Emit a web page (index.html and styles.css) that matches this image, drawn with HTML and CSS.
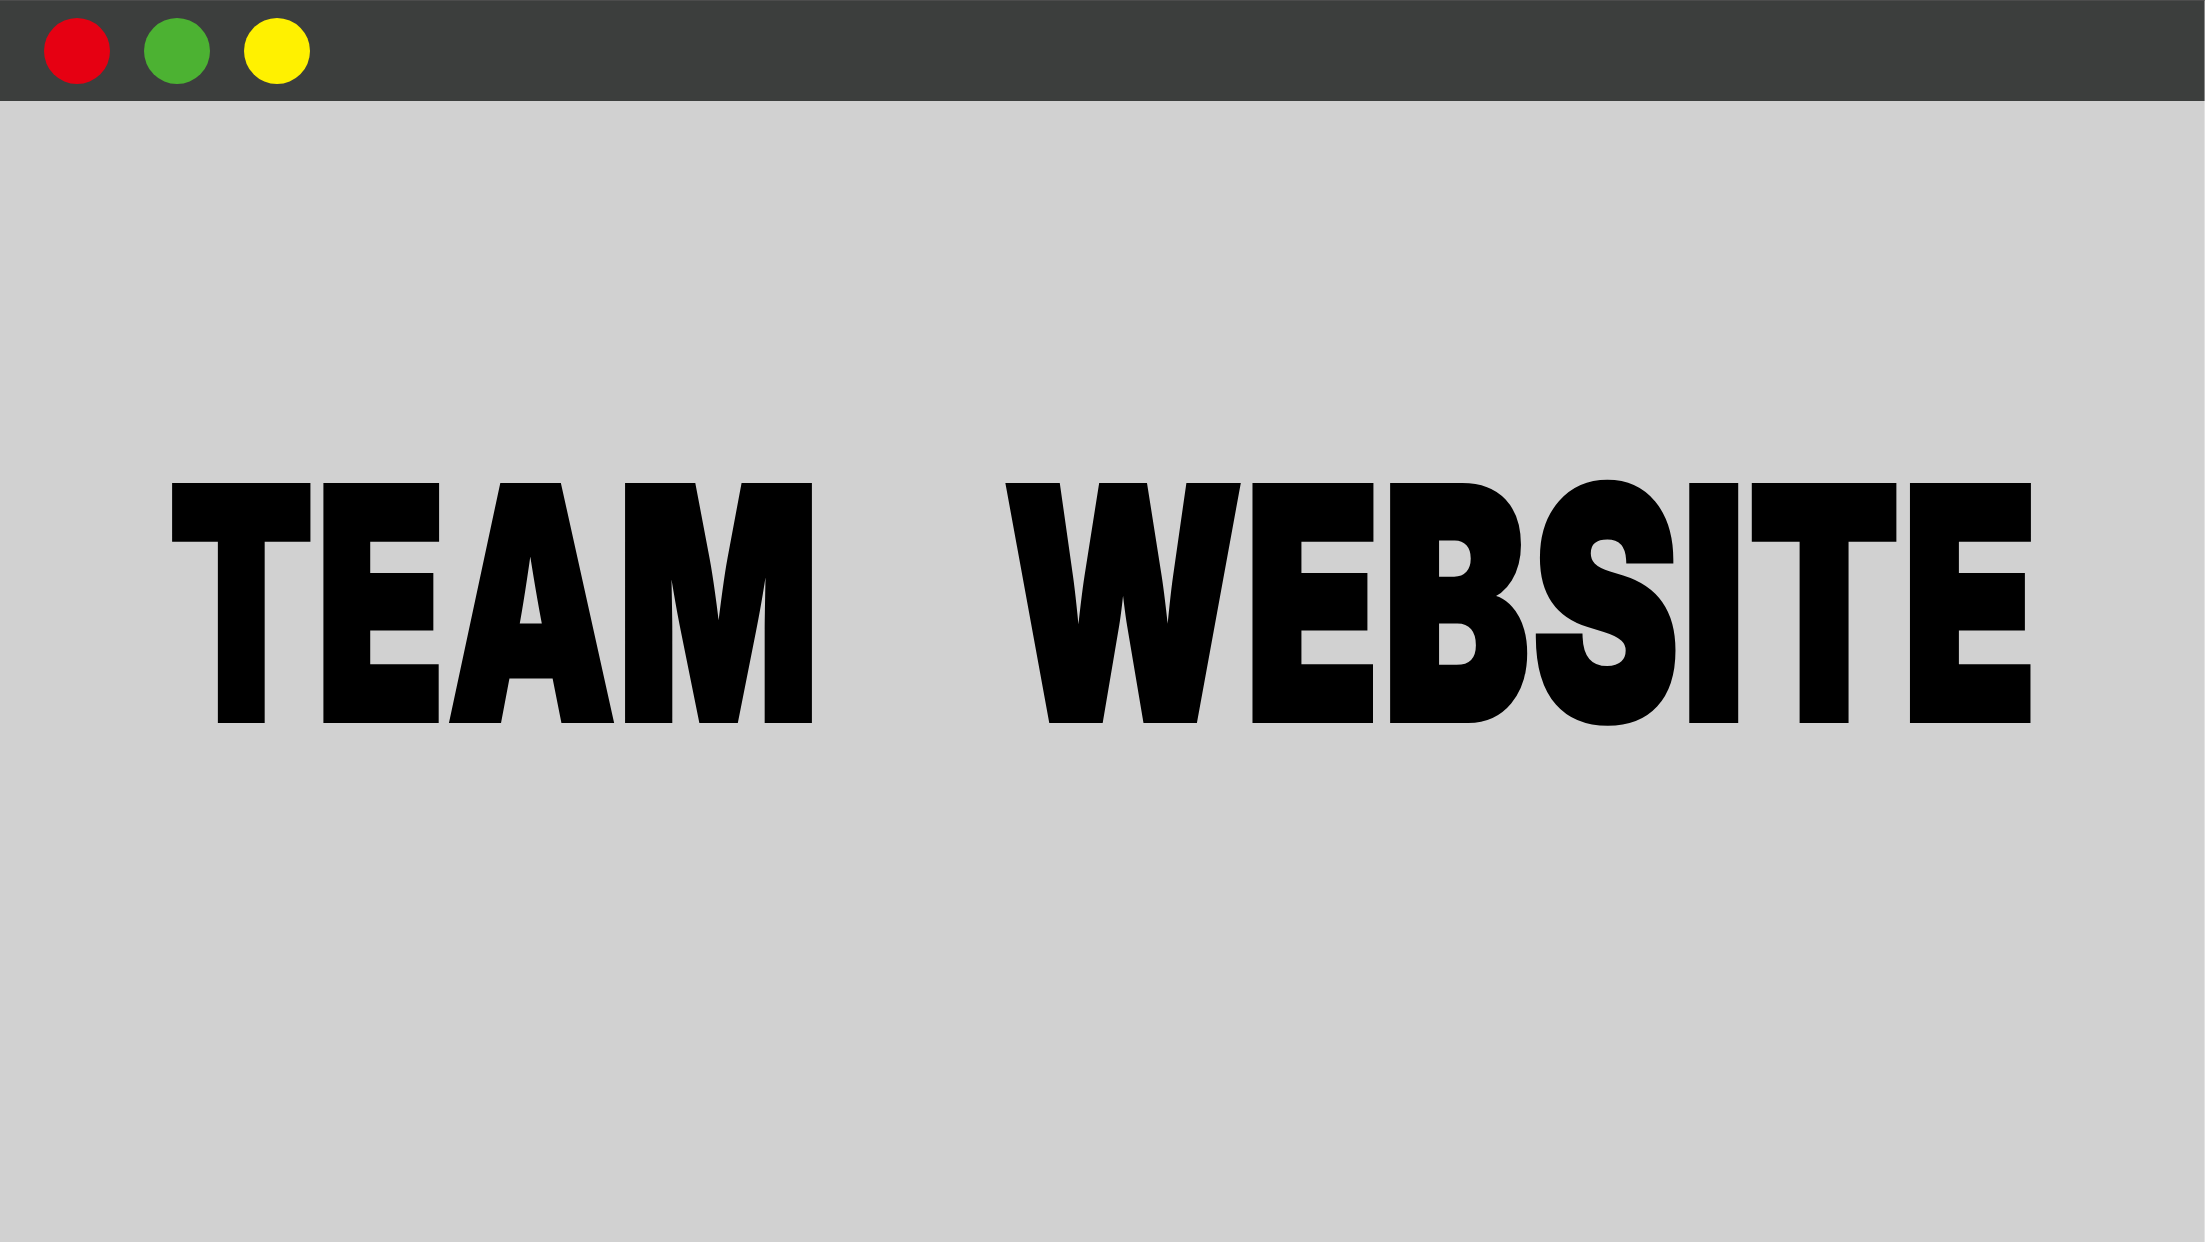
FILE: index.html
```html
<!DOCTYPE html>
<html lang="en">
<head>
<meta charset="utf-8">
<title>Team Website</title>
<link rel="stylesheet" href="styles.css">
</head>
<body>
<div class="window">
  <header class="titlebar">
    <span class="dot dot-red"></span>
    <span class="dot dot-green"></span>
    <span class="dot dot-yellow"></span>
  </header>
  <main class="stage">
    <h1 class="title">
      <span class="word word-team"><span class="ink">TEAM</span></span>
      <span class="word word-website"><span class="ink">WEBSITE</span></span>
    </h1>
  </main>
</div>
</body>
</html>
```
FILE: styles.css
```css
html, body {
  margin: 0;
  padding: 0;
  background: #d1d1d1;
}
.window {
  width: 2205px;
  height: 1242px;
  display: flex;
  flex-direction: column;
  background: #d1d1d1;
  overflow: hidden;
}
.titlebar {
  box-sizing: border-box;
  height: 101px;
  border-top: 1px solid #4c4c4c;
  border-right: 1px solid #8a8a8a;
  background: #3c3e3d;
  display: flex;
  align-items: center;
  gap: 34px;
  padding-left: 44px;
  flex-shrink: 0;
}
.dot {
  width: 66px;
  height: 66px;
  border-radius: 50%;
  display: block;
}
.dot-red { background: #e60012; }
.dot-green { background: #4cb232; }
.dot-yellow { background: #fff100; }
.stage {
  flex: 1;
  box-sizing: border-box;
  padding-top: 302px;
  border-right: 1px solid #e2e2e2;
}
.title {
  margin: 0;
  display: flex;
  padding-left: 169px;
  gap: 191px;
  font-family: Inter, "Liberation Sans", sans-serif;
  font-weight: 900;
  font-size: 319px;
  line-height: 400px;
  color: #000;
}
.word {
  display: block;
  white-space: nowrap;
}
.word-team { width: 644px; }
.word-website { width: 1027px; }
.ink {
  display: inline-block;
  transform-origin: left center;
  transform: scaleX(0.66);
  letter-spacing: 4px;
  -webkit-text-stroke: 8px #000;
}
.word-website .ink {
  transform: scaleX(0.69);
}
```
